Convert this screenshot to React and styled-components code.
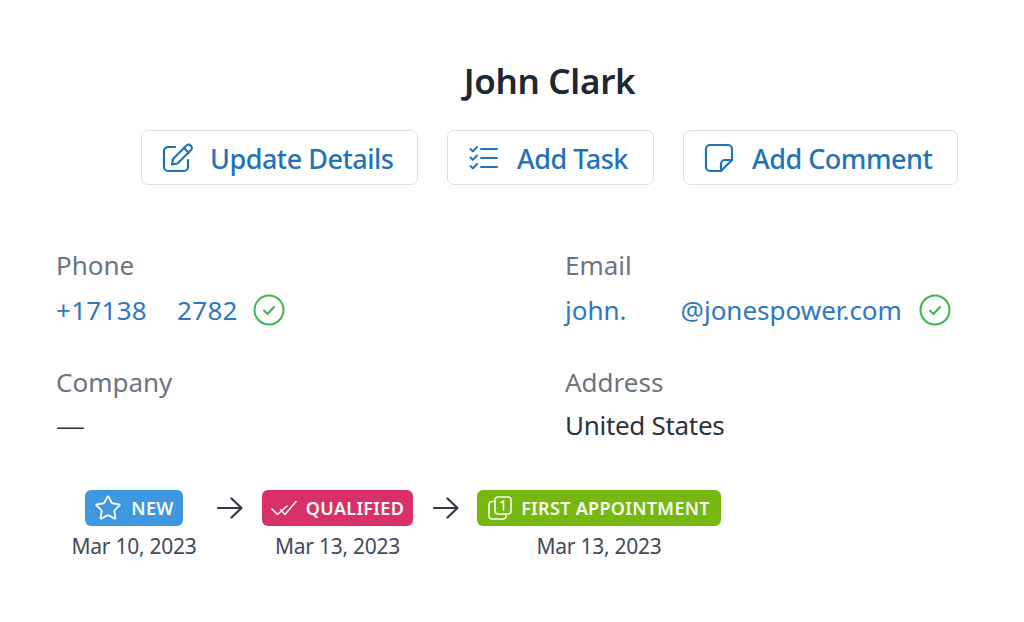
import React from 'react'
import styled, { createGlobalStyle } from 'styled-components'
import { Star } from 'lucide-react'

const GlobalStyle = createGlobalStyle`
  html, body {
    margin: 0;
    padding: 0;
    background: #fefefe;
    font-family: "Noto Sans", "Open Sans", sans-serif;
  }
`

const PencilIcon = () => (
  <svg width="32" height="32" viewBox="0 0 32 32" fill="none" stroke="currentColor" strokeWidth="2.2" strokeLinecap="round" strokeLinejoin="round">
    <path d="M13 5H6a4 4 0 0 0-4 4v16a4 4 0 0 0 4 4h16a4 4 0 0 0 4-4v-7" />
    <path d="M11 17 24.5 3.5a3.2 3.2 0 0 1 4.5 4.5L15.5 21.5l-5.500 1z" />
    <path d="m22 6 4.500 4.500" />
  </svg>
)

const TaskIcon = () => (
  <svg width="30" height="32" viewBox="0 0 30 32" fill="none" stroke="currentColor" strokeWidth="2" strokeLinecap="round" strokeLinejoin="round">
    <path d="m1.500 7 2.400 2.400L8 5" />
    <path d="m1.500 15.500 2.400 2.400L8 13.500" />
    <path d="m1.500 24 2.400 2.400L8 22" />
    <path d="M12 7h16M12 16h16M12 25h16" />
  </svg>
)

const NoteIcon = () => (
  <svg width="30" height="32" viewBox="0 0 30 32" fill="none" stroke="currentColor" strokeWidth="2.2" strokeLinecap="round" strokeLinejoin="round">
    <path d="M17 29H6a4 4 0 0 1-4-4V7a4 4 0 0 1 4-4h18a4 4 0 0 1 4 4v11z" />
    <path d="M17 29v-7a4 4 0 0 1 4-4h7" />
  </svg>
)

const VerifiedIcon = () => (
  <svg width="32" height="32" viewBox="0 0 32 32" fill="none" stroke="#3cb550" strokeWidth="2" strokeLinecap="round" strokeLinejoin="round">
    <circle cx="16" cy="16" r="14.5" />
    <path d="m11 16.500 3.500 3.500 6.500-7" />
  </svg>
)

const DoubleCheckIcon = () => (
  <svg width="26" height="16" viewBox="0 0 26 16" fill="none" stroke="currentColor" strokeWidth="1.5" strokeLinecap="round" strokeLinejoin="round">
    <path d="m1 9 5.500 5.500L16 6" />
    <path d="m9.500 9.500 4.500 5L25 1.500" />
  </svg>
)

const StackIcon = () => (
  <svg width="24" height="26" viewBox="0 0 24 26" fill="none" stroke="currentColor" strokeWidth="1.6" strokeLinecap="round" strokeLinejoin="round">
    <rect x="7" y="2" width="16" height="17" rx="3" />
    <path d="M7 6.500H4a3 3 0 0 0-3 3V21a3 3 0 0 0 3 3h11a3 3 0 0 0 3-3v-2" />
    <path d="m13 7.500 2.500-1.500v9" />
  </svg>
)

const ArrowIcon = () => (
  <svg width="28" height="24" viewBox="0 0 28 24" fill="none" stroke="currentColor" strokeWidth="2.2" strokeLinecap="round" strokeLinejoin="round">
    <path d="M2 12h23" />
    <path d="m15.500 2.500 10 9.500-10 9.500" />
  </svg>
)

const Page = styled.div`
  width: 1024px;
  height: 622px;
  box-sizing: border-box;
  padding: 57px 0 0 56px;
  overflow: hidden;
`

const Header = styled.header`
  width: 817px;
  margin-left: 85px;
  display: flex;
  flex-direction: column;
  align-items: center;
`

const Name = styled.h1`
  margin: 0 0 26px;
  font-size: 35px;
  line-height: 47px;
  font-weight: 600;
  color: #1f2733;
  letter-spacing: -0.3px;
`

const Actions = styled.div`
  width: 100%;
  display: flex;
  gap: 29px;
`

const ActionButton = styled.button`
  width: ${props => props.$width}px;
  height: 55px;
  box-sizing: border-box;
  display: flex;
  align-items: center;
  gap: ${props => props.$gap}px;
  padding: 0 0 0 ${props => props.$pad}px;
  background: #ffffff;
  border: 1px solid #dcdfe2;
  border-radius: 7px;
  color: #1f74b8;
  font-family: inherit;
  font-size: 27px;
  font-weight: 500;
  letter-spacing: -0.5px;
  white-space: nowrap;

  svg {
    flex: none;
  }

  span {
    padding-top: 2px;
  }
`

const Details = styled.section`
  margin-top: 60px;
  display: grid;
  grid-template-columns: 509px 1fr;
  row-gap: 33px;
`

const Field = styled.div`
  display: flex;
  flex-direction: column;
  gap: 4px;
`

const Label = styled.div`
  font-size: 26px;
  line-height: 40px;
  color: #6c7480;
`

const Value = styled.div`
  display: flex;
  align-items: center;
  gap: 17px;
  height: 40px;
  margin: ${props => (props.$link ? '1px 0 -1px' : '-1px 0 1px')};
  font-size: 26px;
  line-height: 40px;
  color: ${props => (props.$link ? '#2f78bd' : '#2b3340')};
  letter-spacing: ${props => (props.$link ? '0' : '-0.3px')};
  white-space: nowrap;
`

const PhoneNumber = styled.span`
  letter-spacing: 0.3px;
  margin-right: -2px;
`

const Masked = styled.span`
  display: inline-block;
  width: ${props => props.$width}px;
`

const Dash = styled.span`
  font-size: 29px;
  font-weight: 300;
  margin-top: -1px;
`

const Timeline = styled.div`
  margin-top: 44px;
  display: flex;
  align-items: flex-start;
`

const Stage = styled.div`
  width: ${props => props.$width}px;
  margin-left: ${props => props.$offset}px;
  display: flex;
  flex-direction: column;
  align-items: center;
  gap: 5px;
`

const Badge = styled.div`
  height: 36px;
  width: ${props => props.$width}px;
  box-sizing: border-box;
  display: flex;
  align-items: center;
  justify-content: center;
  gap: 9px;
  border-radius: 6px;
  background: ${props => props.$color};
  color: #f6fbf4;
  font-size: 18px;
  font-weight: 600;
  letter-spacing: 0.3px;
  white-space: nowrap;
`

const DateText = styled.div`
  font-size: 21px;
  line-height: 30px;
  color: #434b57;
  letter-spacing: -0.25px;
  white-space: nowrap;
`

const Arrow = styled.div`
  flex: none;
  height: 36px;
  margin-left: ${props => props.$offset}px;
  display: flex;
  align-items: center;
  color: #333a45;
`

export default function App() {
  return (
    <Page>
      <GlobalStyle />
      <Header>
        <Name>John Clark</Name>
        <Actions>
          <ActionButton $width={277} $pad={20} $gap={16}>
            <PencilIcon />
            <span>Update Details</span>
          </ActionButton>
          <ActionButton $width={207} $pad={21} $gap={18}>
            <TaskIcon />
            <span>Add Task</span>
          </ActionButton>
          <ActionButton $width={275} $pad={20} $gap={18}>
            <NoteIcon />
            <span>Add Comment</span>
          </ActionButton>
        </Actions>
      </Header>

      <Details>
        <Field>
          <Label>Phone</Label>
          <Value $link>
            <PhoneNumber>
              +17138<Masked $width={30} />2782
            </PhoneNumber>
            <VerifiedIcon />
          </Value>
        </Field>
        <Field>
          <Label>Email</Label>
          <Value $link>
            <span>
              john.<Masked $width={54} />@jonespower.com
            </span>
            <VerifiedIcon />
          </Value>
        </Field>
        <Field>
          <Label>Company</Label>
          <Value>
            <Dash>—</Dash>
          </Value>
        </Field>
        <Field>
          <Label>Address</Label>
          <Value>United States</Value>
        </Field>
      </Details>

      <Timeline>
        <Stage $width={124} $offset={16}>
          <Badge $width={98} $color="#3f97e0">
            <Star size={28} strokeWidth={1.6} />
            NEW
          </Badge>
          <DateText>Mar 10, 2023</DateText>
        </Stage>
        <Arrow $offset={20}>
          <ArrowIcon />
        </Arrow>
        <Stage $width={151} $offset={18}>
          <Badge $width={151} $color="#d83069">
            <DoubleCheckIcon />
            QUALIFIED
          </Badge>
          <DateText>Mar 13, 2023</DateText>
        </Stage>
        <Arrow $offset={19}>
          <ArrowIcon />
        </Arrow>
        <Stage $width={244} $offset={17}>
          <Badge $width={244} $color="#76b80f">
            <StackIcon />
            FIRST APPOINTMENT
          </Badge>
          <DateText>Mar 13, 2023</DateText>
        </Stage>
      </Timeline>
    </Page>
  )
}
